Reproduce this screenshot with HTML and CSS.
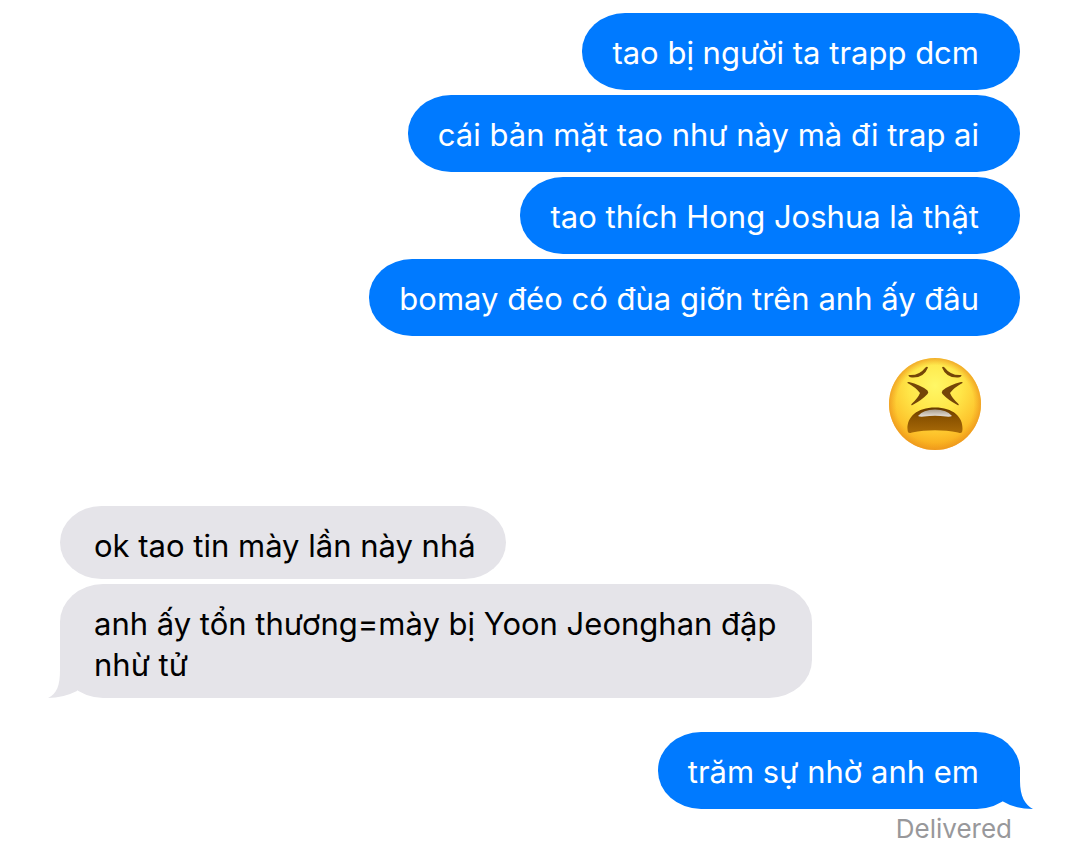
FILE: index.html
```html
<!DOCTYPE html>
<html lang="vi">
<head>
<meta charset="utf-8">
<meta name="viewport" content="width=device-width, initial-scale=1">
<title>Messages</title>
<link rel="stylesheet" href="styles.css">
</head>
<body>
<main class="chat">
  <section class="group sent">
    <p class="bubble">tao bị người ta trapp dcm</p>
    <p class="bubble">cái bản mặt tao như này mà đi trap ai</p>
    <p class="bubble">tao thích Hong Joshua là thật</p>
    <p class="bubble">bomay đéo có đùa giỡn trên anh ấy đâu</p>
    <svg class="emoji" viewBox="0 0 94 94" role="img" aria-label="Tired face">
      <defs>
        <radialGradient id="skin" cx="50%" cy="30%" r="72%">
          <stop offset="0" stop-color="#fff766"/>
          <stop offset=".4" stop-color="#ffe648"/>
          <stop offset=".75" stop-color="#fdc22b"/>
          <stop offset="1" stop-color="#f5a015"/>
        </radialGradient>
        <radialGradient id="edge" cx="50%" cy="50%" r="50%">
          <stop offset=".84" stop-color="#f0a020" stop-opacity="0"/>
          <stop offset="1" stop-color="#eb9420" stop-opacity=".7"/>
        </radialGradient>
        <linearGradient id="mouth" x1="0" y1="0" x2="0" y2="1">
          <stop offset="0" stop-color="#643800"/>
          <stop offset=".4" stop-color="#8a5200"/>
          <stop offset="1" stop-color="#a86a08"/>
        </linearGradient>
        <linearGradient id="teeth" x1="0" y1="0" x2="0" y2="1">
          <stop offset="0" stop-color="#a89c8c"/>
          <stop offset="1" stop-color="#e6e0d8"/>
        </linearGradient>
      </defs>
      <circle cx="47" cy="47" r="46" fill="url(#skin)"/>
      <circle cx="47" cy="47" r="46" fill="url(#edge)"/>
      <g fill="#744508">
        <path d="M20.500 18Q31 19 37.500 10.500Q39 9 40 10.500Q36 21 24 20.500Q20.500 20 20.500 18Z"/>
        <path d="M73.500 18Q63 19 56.500 10.500Q55 9 54 10.500Q58 21 70 20.500Q73.500 20 73.500 18Z"/>
        <path d="M19.500 26Q19 24.500 21 25Q32 27.500 39.500 33.500Q41 35.500 39.500 37Q34 43 24.500 48Q22 49 24 46.500Q30 41 32 36Q28 30.500 19.500 26Z"/>
        <path d="M74.500 26Q75 24.500 73 25Q62 27.500 54.500 33.500Q53 35.500 54.500 37Q60 43 69.500 48Q72 49 70 46.500Q64 41 62 36Q66 30.500 74.500 26Z"/>
      </g>
      <path d="M19.500 72C19 60 29 50.500 47 50.500S75 60 74.500 72C74.300 76.500 73 76.500 70 75.500C55 72.500 39 72.500 24 75.500C21 76.500 19.700 76.500 19.500 72Z" fill="url(#mouth)"/>
      <path d="M30 59Q35 52.500 47 52.500T64 59Q62 60 58 59.500Q47 58 36 59.500Q32 60 30 59Z" fill="url(#teeth)"/>
    </svg>
  </section>
  <section class="group received">
    <p class="bubble">ok tao tin mày lần này nhá</p>
    <p class="bubble">anh ấy tổn thương=mày bị Yoon Jeonghan đập nhừ tử
      <svg class="tail" viewBox="0 0 32 50" aria-hidden="true"><path d="M12 0V22C12 37 9 46 0 50Q15 50 29 43L32 36V0Z"/></svg>
    </p>
  </section>
  <section class="group sent">
    <p class="bubble">trăm sự nhờ anh em
      <svg class="tail" viewBox="0 0 32 50" aria-hidden="true"><path d="M19 8V22C19 37 24 46 32 50Q14 50 1 42L0 34V8Z"/></svg>
    </p>
    <p class="status">Delivered</p>
  </section>
</main>
</body>
</html>
```
FILE: styles.css
```css
* {
  box-sizing: border-box;
}

body {
  margin: 0;
  background: #fff;
  color: #000;
  font: 31px/41px Inter, "Noto Sans", sans-serif;
}

.chat {
  display: flex;
  flex-direction: column;
  padding: 13px 60px 8px;
}

.group {
  display: flex;
  flex-direction: column;
  gap: 5px;
}

.sent {
  align-items: flex-end;
}

.received {
  align-items: flex-start;
  margin: 55px 0 34px;
}

.bubble {
  position: relative;
  margin: 0;
  border-radius: 43px / 38px;
}

.sent .bubble {
  padding: 19px 41px 17px 30px;
  background: #007aff;
  color: #fff;
}

.received .bubble {
  max-width: 752px;
  padding: 19px 30px 13px 34px;
  background: #e5e4e9;
}

.tail {
  position: absolute;
  bottom: 0;
  width: 32px;
  height: 50px;
}

.sent .tail {
  right: -13px;
  fill: #007aff;
}

.received .tail {
  left: -12px;
  fill: #e5e4e9;
}

.emoji {
  width: 94px;
  height: 94px;
  margin: 16px 38px 0 0;
}

.status {
  margin: 0 8px 0 0;
  color: #98989b;
  font-size: 26px;
  line-height: 30px;
}
```
